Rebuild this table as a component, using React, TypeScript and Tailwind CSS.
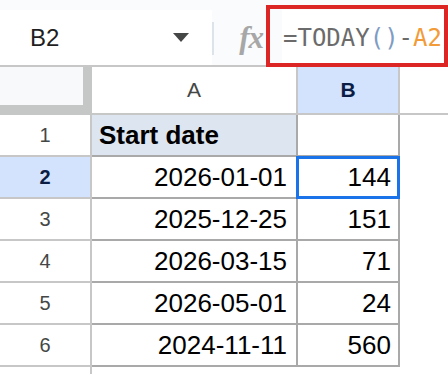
const rows = [
  { n: 1, a: "Start date", b: "" },
  { n: 2, a: "2026-01-01", b: "144" },
  { n: 3, a: "2025-12-25", b: "151" },
  { n: 4, a: "2026-03-15", b: "71" },
  { n: 5, a: "2026-05-01", b: "24" },
  { n: 6, a: "2024-11-11", b: "560" },
];

export default function App() {
  return (
    <div className="relative w-[448px] h-[374px] overflow-hidden bg-white font-['Liberation_Sans',Arial,sans-serif] text-black">
      <div className="h-[10px] bg-[#f9fbfd]" />

      {/* formula bar */}
      <div className="flex h-[55px] bg-[#f9fbfd]">
        <div className="relative w-[212px] bg-white flex items-center">
          <span className="ml-[30px] text-[24px] leading-none text-[#1f1f1f]">B2</span>
          <svg className="absolute left-[173px] top-[23px]" width="16" height="9" viewBox="0 0 16 9">
            <polygon points="0,0 16,0 8,9" fill="#444746" />
          </svg>
        </div>
        <div className="w-[2px] mt-[12px] h-[33px] bg-[#dde3ea]" />
        <div className="w-[52px] flex items-center justify-end pr-[3px]">
          <span className="font-['Liberation_Serif',serif] italic font-bold text-[31px] leading-none text-[#a7a7a7] tracking-[-1px]">
            fx
          </span>
        </div>
        <div className="w-[16px]" />
        <div className="flex-1 bg-white flex items-center pl-[1px] font-['DejaVu_Sans_Mono',monospace] text-[24px] leading-none">
          <span className="text-[#6b6b6b]">=TODAY</span>
          <span className="text-[#7f9cc4]">()</span>
          <span className="text-[#6b6b6b]">-</span>
          <span className="text-[#f29b38]">A2</span>
        </div>
      </div>
      <div className="h-[2px] bg-[#c7c7c7]" />

      {/* column headers */}
      <div className="flex h-[48px]">
        <div className="w-[92px] bg-[#c4c7c5]">
          <div className="w-[83px] h-[38px] bg-[#f8f9fa]" />
        </div>
        <div className="w-[206px] border-r-2 border-b-2 border-[#c7c7c7] flex items-center justify-center text-[21px] text-[#444746]">
          A
        </div>
        <div className="w-[102px] border-r-2 border-b-2 border-[#c7c7c7] bg-[#d3e3fd] flex items-center justify-center text-[21px] font-bold text-[#0b1d44]">
          B
        </div>
        <div className="flex-1 border-b-2 border-[#c7c7c7]" />
      </div>

      {/* rows */}
      {rows.map((r) => (
        <div key={r.n} className="flex h-[42px]">
          <div
            className={`w-[92px] border-r-2 border-b-2 border-[#c7c7c7] flex items-center justify-center text-[20px] ${
              r.n === 2 ? "bg-[#d3e3fd] font-bold text-[#0b1d44]" : "text-[#444746]"
            }`}
          >
            {r.n}
          </div>
          {r.n === 1 ? (
            <div className="w-[206px] border-r-2 border-b-2 border-[#a9a9a9] bg-[#dde6f0] flex items-center pl-[7px] text-[26px] font-bold">
              {r.a}
            </div>
          ) : (
            <div className="w-[206px] border-r-2 border-b-2 border-[#a9a9a9] flex items-center justify-end pr-[9px] text-[26px]">
              {r.a}
            </div>
          )}
          <div className="relative w-[102px] border-r-2 border-b-2 border-[#a9a9a9] flex items-center justify-end pr-[7px] text-[26px]">
            {r.b}
            {r.n === 2 && (
              <div className="absolute left-[-2px] top-[-1px] right-[-2px] bottom-[-2px] border-[3px] border-[#1a73e8]" />
            )}
          </div>
          <div className="flex-1" />
        </div>
      ))}
      <div className="flex h-[10px]">
        <div className="w-[92px] border-r-2 border-[#c7c7c7]" />
      </div>

      {/* highlight around formula */}
      <div className="absolute left-[266px] top-[5px] w-[182px] h-[62px] border-4 border-[#dc2626]" />
    </div>
  );
}
